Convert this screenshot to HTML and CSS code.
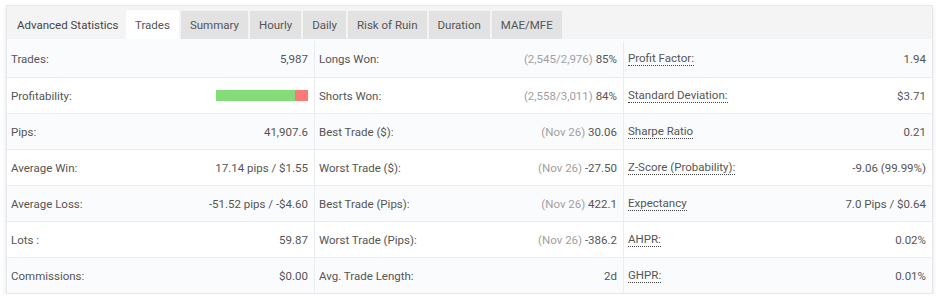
FILE: index.html
```html
<!DOCTYPE html>
<html lang="en">
<head>
    <meta charset="UTF-8">
    <meta name="viewport" content="width=device-width, initial-scale=1.0">
    <title>Advanced Statistics</title>
    <link rel="stylesheet" href="styles.css">
</head>
<body>
    <div class="card">
        <div class="tabs">
            <span class="tabs-title">Advanced Statistics</span>
            <span class="tab active">Trades</span>
            <span class="tab">Summary</span>
            <span class="tab">Hourly</span>
            <span class="tab">Daily</span>
            <span class="tab">Risk of Ruin</span>
            <span class="tab">Duration</span>
            <span class="tab">MAE/MFE</span>
        </div>
        <div class="stats">
            <div class="row">
                <div class="cell"><span>Trades:</span><span>5,987</span></div>
                <div class="cell"><span>Longs Won:</span><span><span class="muted">(2,545/2,976)</span> 85%</span></div>
                <div class="cell"><span class="hint">Profit Factor:</span><span>1.94</span></div>
            </div>
            <div class="row">
                <div class="cell"><span>Profitability:</span>
                    <span class="bar"><span class="bar-win" style="width: 86%"></span><span class="bar-loss"></span></span>
                </div>
                <div class="cell"><span>Shorts Won:</span><span><span class="muted">(2,558/3,011)</span> 84%</span></div>
                <div class="cell"><span class="hint">Standard Deviation:</span><span>$3.71</span></div>
            </div>
            <div class="row">
                <div class="cell"><span>Pips:</span><span>41,907.6</span></div>
                <div class="cell"><span>Best Trade ($):</span><span><span class="muted">(Nov 26)</span> 30.06</span></div>
                <div class="cell"><span class="hint">Sharpe Ratio</span><span>0.21</span></div>
            </div>
            <div class="row">
                <div class="cell"><span>Average Win:</span><span>17.14 pips / $1.55</span></div>
                <div class="cell"><span>Worst Trade ($):</span><span><span class="muted">(Nov 26)</span> -27.50</span></div>
                <div class="cell"><span class="hint">Z-Score (Probability):</span><span>-9.06 (99.99%)</span></div>
            </div>
            <div class="row">
                <div class="cell"><span>Average Loss:</span><span>-51.52 pips / -$4.60</span></div>
                <div class="cell"><span>Best Trade (Pips):</span><span><span class="muted">(Nov 26)</span> 422.1</span></div>
                <div class="cell"><span class="hint">Expectancy</span><span>7.0 Pips / $0.64</span></div>
            </div>
            <div class="row">
                <div class="cell"><span>Lots :</span><span>59.87</span></div>
                <div class="cell"><span>Worst Trade (Pips):</span><span><span class="muted">(Nov 26)</span> -386.2</span></div>
                <div class="cell"><span class="hint">AHPR:</span><span>0.02%</span></div>
            </div>
            <div class="row">
                <div class="cell"><span>Commissions:</span><span>$0.00</span></div>
                <div class="cell"><span>Avg. Trade Length:</span><span>2d</span></div>
                <div class="cell"><span class="hint">GHPR:</span><span>0.01%</span></div>
            </div>
        </div>
    </div>
</body>
</html>
```

FILE: styles.css
```css
body {
    margin: 0;
    padding: 5px 8px 0 6px;
    background: #fff;
    font-family: Roboto, "Liberation Sans", sans-serif;
    font-size: 11.5px;
    color: #555;
}
.card {
    width: 925px;
    border: 1px solid #e6e8eb;
    box-shadow: 0 2px 4px rgba(0, 0, 0, 0.12);
}
.tabs {
    display: flex;
    align-items: flex-end;
    gap: 2px;
    height: 33px;
    padding-left: 4px;
    background: #f4f4f4;
}
.tabs-title {
    align-self: stretch;
    display: flex;
    align-items: center;
    padding: 4px 0 0 6px;
    width: 107px;
    color: #444;
}
.tab {
    display: flex;
    align-items: center;
    height: 28px;
    padding: 0 9px;
    background: #e2e2e2;
    color: #555;
}
.tab.active {
    height: 29px;
    background: #fff;
}
.row {
    display: grid;
    grid-template-columns: 307px 309px 1fr;
    height: 35px;
    border-top: 1px solid #e9ecf1;
}
.row:first-child {
    border-top: none;
    height: 36px;
    padding-top: 2px;
}
.row:nth-child(odd) {
    background: #fafbfc;
}
.cell {
    display: flex;
    align-items: center;
    justify-content: space-between;
    padding: 0 6px 0 4px;
    border-left: 1px solid #e9ecf1;
}
.cell:first-child {
    border-left: none;
}
.muted {
    color: #a0a0a0;
}
.hint {
    border-bottom: 1px dotted #444;
    line-height: 13px;
}
.bar {
    display: flex;
    width: 92px;
    height: 11px;
}
.bar-win {
    background: #82dd78;
}
.bar-loss {
    flex: 1;
    background: #fa7a7a;
}
```
